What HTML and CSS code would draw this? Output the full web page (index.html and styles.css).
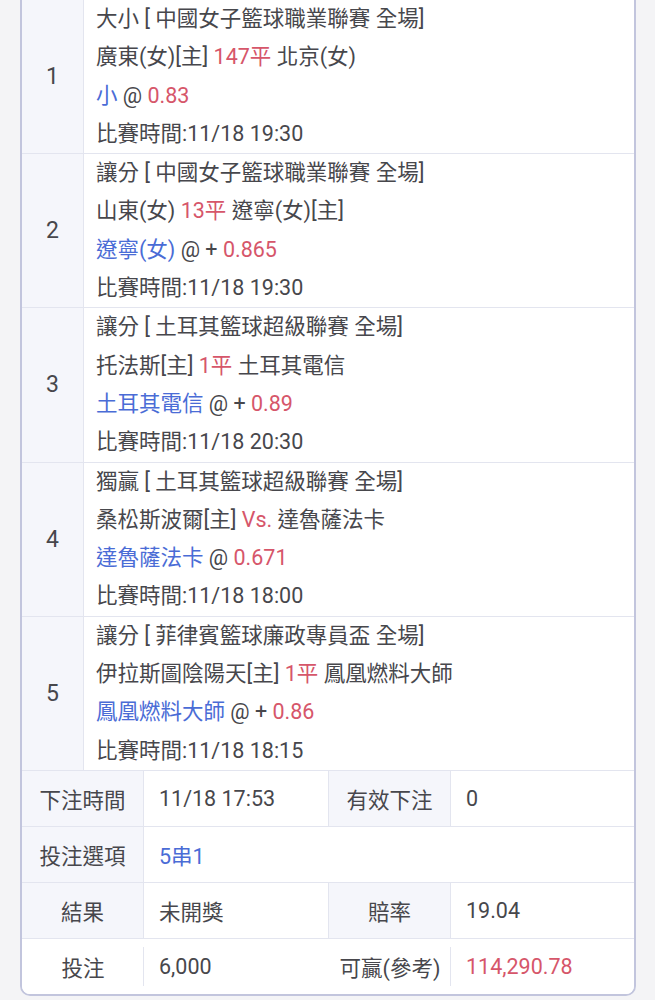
FILE: index.html
```html
<!DOCTYPE html>
<html lang="zh-Hant">
<head>
<meta charset="utf-8">
<link rel="stylesheet" href="styles.css">
</head>
<body>
<div class="card">
  <div class="leg">
    <div class="num">1</div>
    <div class="info">
      <div class="line">大小 [ 中國女子籃球職業聯賽 全場]</div>
      <div class="line">廣東(女)[主] <span class="red">147平</span> 北京(女)</div>
      <div class="line"><span class="blue">小</span> @ <span class="red">0.83</span></div>
      <div class="line">比賽時間:11/18 19:30</div>
    </div>
  </div>
  <div class="leg">
    <div class="num">2</div>
    <div class="info">
      <div class="line">讓分 [ 中國女子籃球職業聯賽 全場]</div>
      <div class="line">山東(女) <span class="red">13平</span> 遼寧(女)[主]</div>
      <div class="line"><span class="blue">遼寧(女)</span> @ + <span class="red">0.865</span></div>
      <div class="line">比賽時間:11/18 19:30</div>
    </div>
  </div>
  <div class="leg">
    <div class="num">3</div>
    <div class="info">
      <div class="line">讓分 [ 土耳其籃球超級聯賽 全場]</div>
      <div class="line">托法斯[主] <span class="red">1平</span> 土耳其電信</div>
      <div class="line"><span class="blue">土耳其電信</span> @ + <span class="red">0.89</span></div>
      <div class="line">比賽時間:11/18 20:30</div>
    </div>
  </div>
  <div class="leg">
    <div class="num">4</div>
    <div class="info">
      <div class="line">獨贏 [ 土耳其籃球超級聯賽 全場]</div>
      <div class="line">桑松斯波爾[主] <span class="red">Vs.</span> 達魯薩法卡</div>
      <div class="line"><span class="blue">達魯薩法卡</span> @ <span class="red">0.671</span></div>
      <div class="line">比賽時間:11/18 18:00</div>
    </div>
  </div>
  <div class="leg">
    <div class="num">5</div>
    <div class="info">
      <div class="line">讓分 [ 菲律賓籃球廉政專員盃 全場]</div>
      <div class="line">伊拉斯圖陰陽天[主] <span class="red">1平</span> 鳳凰燃料大師</div>
      <div class="line"><span class="blue">鳳凰燃料大師</span> @ + <span class="red">0.86</span></div>
      <div class="line">比賽時間:11/18 18:15</div>
    </div>
  </div>
  <div class="summary">
    <div class="lab">下注時間</div>
    <div class="val mid">11/18 17:53</div>
    <div class="lab">有效下注</div>
    <div class="val end">0</div>

    <div class="lab">投注選項</div>
    <div class="val wide blue">5串1</div>

    <div class="lab">結果</div>
    <div class="val mid">未開獎</div>
    <div class="lab">賠率</div>
    <div class="val end">19.04</div>

    <div class="lab last">投注</div>
    <div class="val last">6,000</div>
    <div class="lab last">可贏(參考)</div>
    <div class="val last red">114,290.78</div>
  </div>
</div>
</body>
</html>
```

FILE: styles.css
```css
html, body {
  margin: 0;
  padding: 0;
  background: #f4f4f6;
}
body {
  font-family: Roboto, "Noto Sans CJK TC", "Noto Sans", sans-serif;
  color: #47474c;
  font-size: 21.5px;
}
.card {
  margin: -2px 19px 0 20px;
  background: #fff;
  border: 2px solid #c2c5dd;
  border-radius: 0 0 10px 10px;
  overflow: hidden;
}
.leg {
  display: flex;
  border-bottom: 1px solid #e3e5ef;
}
.num {
  width: 61px;
  flex: none;
  background: #f5f6fb;
  border-right: 1px solid #e3e5ef;
  display: flex;
  align-items: center;
  justify-content: center;
  font-size: 23px;
}
.info {
  padding-left: 12px;
  flex: 1;
}
.line {
  height: 38.3px;
  line-height: 38.3px;
  white-space: nowrap;
}
.red { color: #d6566a; }
.blue { color: #4a6cd6; }
.summary {
  display: grid;
  grid-template-columns: 122px 185px 122px 1fr;
}
.lab, .val {
  height: 55px;
  display: flex;
  align-items: center;
  border-bottom: 1px solid #e3e5ef;
}
.lab {
  background: #f5f6fb;
  justify-content: center;
  border-right: 1px solid #e3e5ef;
}
.val {
  padding-left: 15px;
}
.val.mid {
  border-right: 1px solid #e3e5ef;
}
.val.wide {
  grid-column: span 3;
}
.lab.last, .val.last {
  border-bottom: none;
  background: #fff;
}
.lab.last {
  border-right: none;
  position: relative;
}
.lab.last::after {
  content: "";
  position: absolute;
  right: 0;
  top: 8px;
  bottom: 8px;
  width: 1px;
  background: #e3e5ef;
}
```
